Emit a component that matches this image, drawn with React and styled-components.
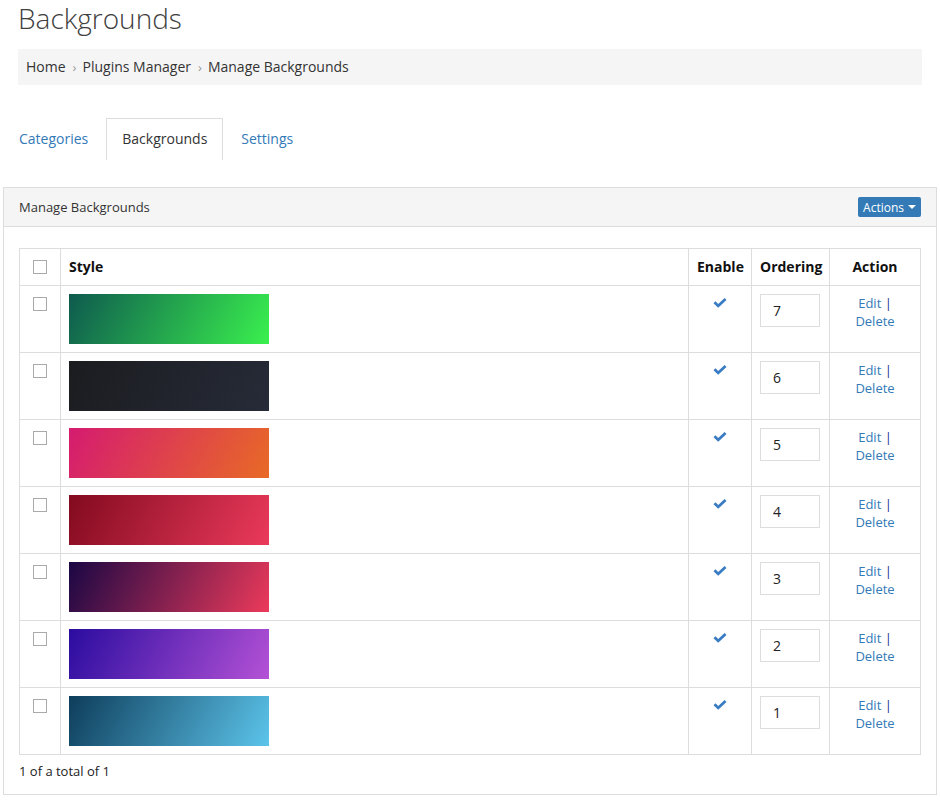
import React from 'react';
import styled, { createGlobalStyle } from 'styled-components';

const GlobalStyle = createGlobalStyle`
  body {
    margin: 0;
    background: #fff;
    font-family: 'Open Sans', 'Liberation Sans', sans-serif;
    color: #333;
  }
`;

const backgrounds = [
  { id: 7, from: '#0e5a4e', to: '#3af04e' },
  { id: 6, from: '#1b1c1f', to: '#262b38' },
  { id: 5, from: '#d51b70', to: '#e86a26' },
  { id: 4, from: '#820a1f', to: '#eb3a5b' },
  { id: 3, from: '#1a0744', to: '#ec3a5a' },
  { id: 2, from: '#2a0c9f', to: '#b452d6' },
  { id: 1, from: '#0e3d5b', to: '#5cc4ea' },
];

const Page = styled.div`
  width: 940px;
  padding-bottom: 6px;
`;

const Title = styled.h1`
  margin: 0 0 0 18px;
  font-size: 28px;
  line-height: 36px;
  font-weight: 300;
  color: #404040;
`;

const Breadcrumb = styled.ol`
  list-style: none;
  margin: 13px 18px 0;
  padding: 8px 8px;
  background: #f5f5f5;
  display: flex;
  font-size: 14px;
  line-height: 20px;
  color: #333;
`;

const Crumb = styled.li`
  display: flex;
`;

const Sep = styled.span`
  color: #999;
  padding: 0 6px 0 7px;
  font-size: 13px;
`;

const Tabs = styled.ul`
  list-style: none;
  display: flex;
  margin: 33px 0 0 3px;
  padding: 0;
`;

const Tab = styled.li`
  margin-right: 2px;
  padding: 10px 15px 11px;
  font-size: 14px;
  line-height: 20px;
  border: 1px solid ${(p) => (p.$active ? '#ddd' : 'transparent')};
  border-bottom: none;
  color: ${(p) => (p.$active ? '#333' : '#337ab7')};
  cursor: pointer;
`;

const Panel = styled.div`
  margin: 27px 3px 0;
  border: 1px solid #ddd;
`;

const PanelHeading = styled.div`
  display: flex;
  align-items: center;
  justify-content: space-between;
  padding: 9px 15px;
  background: #f5f5f5;
  border-bottom: 1px solid #ddd;
  font-size: 13px;
  line-height: 20px;
`;

const ActionsButton = styled.button`
  display: flex;
  align-items: center;
  gap: 4px;
  height: 20px;
  padding: 0 5px;
  border: none;
  border-radius: 2px;
  background: #337ab7;
  color: #fff;
  font-family: inherit;
  font-size: 12px;
  cursor: pointer;
`;

const Caret = styled.span`
  width: 0;
  height: 0;
  border-left: 4px solid transparent;
  border-right: 4px solid transparent;
  border-top: 4px solid #fff;
`;

const PanelBody = styled.div`
  padding: 21px 15px 14px;
`;

const Table = styled.table`
  width: 100%;
  border-collapse: collapse;
  table-layout: fixed;
  font-size: 13px;
`;

const Th = styled.th`
  border: 1px solid #ddd;
  padding: 8px;
  font-size: 14px;
  line-height: 20px;
  font-weight: 700;
  color: #111;
  text-align: ${(p) => p.$align || 'center'};
`;

const Td = styled.td`
  border: 1px solid #ddd;
  padding: 8px;
  vertical-align: top;
  line-height: 18px;
  text-align: ${(p) => p.$align || 'center'};
`;

const Checkbox = styled.span`
  display: inline-block;
  width: 12px;
  height: 12px;
  border: 1px solid #aaa;
  background: #fff;
  margin-top: ${(p) => p.$offset || 3}px;
  vertical-align: top;
`;

const Swatch = styled.div`
  width: 200px;
  height: 50px;
  background: linear-gradient(118deg, ${(p) => p.$from}, ${(p) => p.$to});
`;

const Check = styled.svg`
  display: inline-block;
  margin-top: 4px;
`;

const OrderInput = styled.input`
  box-sizing: border-box;
  display: block;
  width: 60px;
  height: 33px;
  padding: 0 12px;
  border: 1px solid #ddd;
  font-family: inherit;
  font-size: 14px;
  color: #222;
  outline: none;
`;

const Link = styled.a`
  color: #337ab7;
  text-decoration: none;
  cursor: pointer;
`;

const Bar = styled.span`
  color: #1a2a8a;
`;

const Footer = styled.div`
  margin-top: 7px;
  font-size: 13px;
  line-height: 18px;
  color: #222;
`;

const crumbs = ['Home', 'Plugins Manager', 'Manage Backgrounds'];

export default function App() {
  return (
    <Page>
      <GlobalStyle />
      <Title>Backgrounds</Title>
      <Breadcrumb>
        {crumbs.map((c, i) => (
          <Crumb key={c}>
            {i > 0 && <Sep>›</Sep>}
            {c}
          </Crumb>
        ))}
      </Breadcrumb>
      <Tabs>
        <Tab>Categories</Tab>
        <Tab $active>Backgrounds</Tab>
        <Tab>Settings</Tab>
      </Tabs>
      <Panel>
        <PanelHeading>
          <span>Manage Backgrounds</span>
          <ActionsButton>
            Actions <Caret />
          </ActionsButton>
        </PanelHeading>
        <PanelBody>
          <Table>
            <colgroup>
              <col style={{ width: 41 }} />
              <col />
              <col style={{ width: 63 }} />
              <col style={{ width: 78 }} />
              <col style={{ width: 91 }} />
            </colgroup>
            <thead>
              <tr>
                <Th>
                  <Checkbox $offset={3} />
                </Th>
                <Th $align="left">Style</Th>
                <Th>Enable</Th>
                <Th>Ordering</Th>
                <Th>Action</Th>
              </tr>
            </thead>
            <tbody>
              {backgrounds.map((b) => (
                <tr key={b.id}>
                  <Td>
                    <Checkbox />
                  </Td>
                  <Td $align="left">
                    <Swatch $from={b.from} $to={b.to} />
                  </Td>
                  <Td>
                    <Check width="14" height="10" viewBox="0 0 14 10">
                      <path d="M0.5 5.2 L2.4 3.3 L5.2 6 L11.6 0 L13.5 1.9 L5.2 9.8 Z" fill="#3a7cc4" />
                    </Check>
                  </Td>
                  <Td $align="left">
                    <OrderInput defaultValue={b.id} />
                  </Td>
                  <Td>
                    <Link>Edit</Link> <Bar>|</Bar>
                    <br />
                    <Link>Delete</Link>
                  </Td>
                </tr>
              ))}
            </tbody>
          </Table>
          <Footer>1 of a total of 1</Footer>
        </PanelBody>
      </Panel>
    </Page>
  );
}
